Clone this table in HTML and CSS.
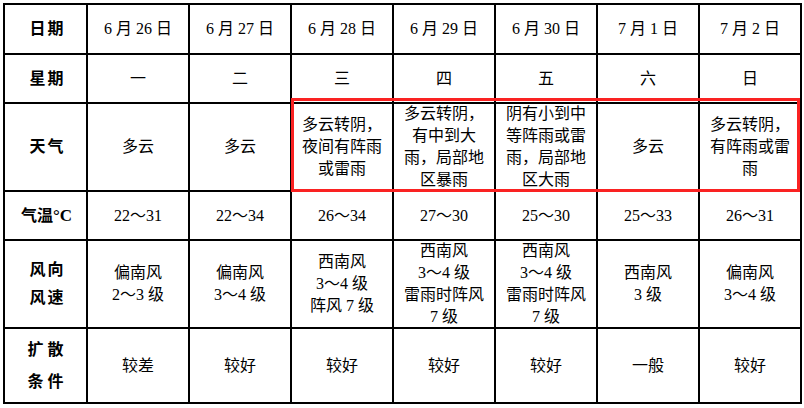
FILE: index.html
```html
<!DOCTYPE html>
<html lang="zh-CN">
<head>
<meta charset="utf-8">
<title>天气预报</title>
<link rel="stylesheet" href="styles.css">
</head>
<body>
<div class="sheet">
  <div class="grid">
    <div class="cell head">日期</div>
    <div class="cell">6 月 26 日</div>
    <div class="cell">6 月 27 日</div>
    <div class="cell">6 月 28 日</div>
    <div class="cell">6 月 29 日</div>
    <div class="cell">6 月 30 日</div>
    <div class="cell">7 月 1 日</div>
    <div class="cell">7 月 2 日</div>

    <div class="cell head">星期</div>
    <div class="cell">一</div>
    <div class="cell">二</div>
    <div class="cell">三</div>
    <div class="cell">四</div>
    <div class="cell">五</div>
    <div class="cell">六</div>
    <div class="cell">日</div>

    <div class="cell head">天气</div>
    <div class="cell">多云</div>
    <div class="cell">多云</div>
    <div class="cell multi">多云转阴，<br>夜间有阵雨<br>或雷雨</div>
    <div class="cell multi">多云转阴，<br>有中到大<br>雨，局部地<br>区暴雨</div>
    <div class="cell multi">阴有小到中<br>等阵雨或雷<br>雨，局部地<br>区大雨</div>
    <div class="cell">多云</div>
    <div class="cell multi">多云转阴，<br>有阵雨或雷<br>雨</div>

    <div class="cell head temp">气温<span class="unit">°C</span></div>
    <div class="cell">22～31</div>
    <div class="cell">22～34</div>
    <div class="cell">26～34</div>
    <div class="cell">27～30</div>
    <div class="cell">25～30</div>
    <div class="cell">25～33</div>
    <div class="cell">26～31</div>

    <div class="cell head tall">风向<br>风速</div>
    <div class="cell multi">偏南风<br>2～3 级</div>
    <div class="cell multi">偏南风<br>3～4 级</div>
    <div class="cell multi">西南风<br>3～4 级<br>阵风 7 级</div>
    <div class="cell multi">西南风<br>3～4 级<br>雷雨时阵风<br>7 级</div>
    <div class="cell multi">西南风<br>3～4 级<br>雷雨时阵风<br>7 级</div>
    <div class="cell multi">西南风<br>3 级</div>
    <div class="cell multi">偏南风<br>3～4 级</div>

    <div class="cell head taller">扩散<br>条件</div>
    <div class="cell">较差</div>
    <div class="cell">较好</div>
    <div class="cell">较好</div>
    <div class="cell">较好</div>
    <div class="cell">较好</div>
    <div class="cell">一般</div>
    <div class="cell">较好</div>
  </div>
  <div class="highlight"></div>
</div>
</body>
</html>
```

FILE: styles.css
```css
html, body {
  margin: 0;
  padding: 0;
  background: #ffffff;
}

body {
  padding: 3px 0 0 3px;
  font-family: "Liberation Serif", "Noto Sans CJK SC", serif;
  font-size: 16px;
  color: #000000;
}

.sheet {
  position: relative;
  width: 799px;
}

.grid {
  display: grid;
  grid-template-columns: 83px repeat(7, 102px);
  grid-template-rows: 50px 49px 88px 49px 88px 75px;
  border-left: 2px solid #000;
  border-top: 2px solid #000;
}

.cell {
  box-sizing: border-box;
  border-right: 2px solid #000;
  border-bottom: 2px solid #000;
  display: flex;
  align-items: center;
  justify-content: center;
  text-align: center;
  line-height: 22px;
  white-space: nowrap;
}

.multi {
  line-height: 22px;
}

.head {
  font-weight: bold;
  letter-spacing: 2px;
  padding-left: 4px;
}

.temp {
  letter-spacing: 0;
  padding-left: 2px;
}

.unit {
  font-size: 17px;
  letter-spacing: 0;
}

.tall {
  line-height: 28px;
}

.taller {
  line-height: 32px;
  letter-spacing: 4px;
}

.highlight {
  position: absolute;
  left: 288px;
  top: 95px;
  width: 509px;
  height: 94px;
  box-sizing: border-box;
  border: 3px solid #fa2222;
  pointer-events: none;
}
```
